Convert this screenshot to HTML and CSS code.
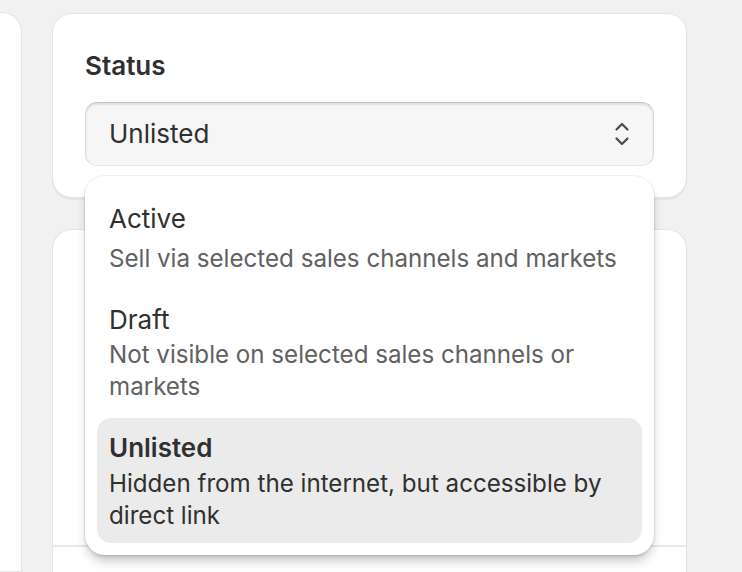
FILE: index.html
```html
<!DOCTYPE html>
<html lang="en">
<head>
<meta charset="utf-8">
<title>Status</title>
<link rel="stylesheet" href="styles.css">
</head>
<body>
<div class="page">
  <div class="side-card"></div>
  <div class="main">
    <section class="card status-card">
      <h2 class="card-title">Status</h2>
      <div class="select-wrap">
        <div class="select">
          <span class="select-value">Unlisted</span>
          <svg class="select-icon" width="16" height="26" viewBox="0 0 16 26" aria-hidden="true">
            <path d="M2.5 8.5 L8 3 L13.5 8.5" fill="none" stroke="#4a4a4a" stroke-width="2.2" stroke-linecap="round" stroke-linejoin="round"/>
            <path d="M2.5 17.5 L8 23 L13.5 17.5" fill="none" stroke="#4a4a4a" stroke-width="2.2" stroke-linecap="round" stroke-linejoin="round"/>
          </svg>
        </div>
        <div class="popover">
          <div class="option option-first">
            <div class="option-title">Active</div>
            <div class="option-desc">Sell via selected sales channels and markets</div>
          </div>
          <div class="option">
            <div class="option-title">Draft</div>
            <div class="option-desc">Not visible on selected sales channels or markets</div>
          </div>
          <div class="option option-selected">
            <div class="option-title">Unlisted</div>
            <div class="option-desc">Hidden from the internet, but accessible by direct link</div>
          </div>
        </div>
      </div>
    </section>
    <section class="card second-card">
      <div class="second-top"></div>
      <div class="divider"></div>
      <div class="second-bottom"></div>
    </section>
  </div>
</div>
</body>
</html>
```

FILE: styles.css
```css
* {
  box-sizing: border-box;
}

html, body {
  margin: 0;
  padding: 0;
  height: 100%;
}

body {
  background: #f1f1f1;
  font-family: Inter, "Noto Sans", "Liberation Sans", sans-serif;
  color: #303030;
  overflow: hidden;
}

.page {
  display: flex;
  gap: 30px;
  padding-top: 13px;
  height: 572px;
  overflow: hidden;
}

.side-card {
  width: 22px;
  flex: none;
  margin-top: -1px;
  background: #fff;
  border: 1px solid #e4e4e4;
  border-left: none;
  border-radius: 0 20px 0 0;
  box-shadow: 0 1px 0 rgba(26, 26, 26, 0.06);
}

.main {
  width: 635px;
  flex: none;
  display: flex;
  flex-direction: column;
  gap: 31px;
}

.card {
  background: #fff;
  border: 1px solid #e4e4e4;
  border-radius: 20px;
  box-shadow: 0 2px 0 rgba(26, 26, 26, 0.05);
}

.status-card {
  padding: 36px 32px 31px;
  position: relative;
  z-index: 2;
}

.card-title {
  margin: 0 0 20px;
  font-size: 26px;
  line-height: 32px;
  font-weight: 600;
  color: #303030;
}

.select-wrap {
  position: relative;
}

.select {
  height: 64px;
  display: flex;
  align-items: center;
  justify-content: space-between;
  padding: 0 23px 0 23px;
  background: #f6f6f6;
  border: 1px solid #dadada;
  border-top-color: #c4c4c4;
  border-bottom-color: #e8e8e8;
  border-radius: 12px;
  box-shadow: inset 0 2px 2px rgba(26, 26, 26, 0.1);
}

.select-value {
  font-size: 26px;
  line-height: 32px;
  color: #303030;
}

.select-icon {
  display: block;
  flex: none;
}

.popover {
  position: absolute;
  top: calc(100% + 10px);
  left: 0;
  right: 0;
  background: #fff;
  border-radius: 20px;
  padding: 13px 12px 12px;
  display: flex;
  flex-direction: column;
  gap: 4px;
  box-shadow:
    0 0 0 1px rgba(26, 26, 26, 0.06),
    0 2px 3px rgba(26, 26, 26, 0.08),
    0 8px 12px -3px rgba(26, 26, 26, 0.28);
}

.option {
  padding: 14px 12px 11px;
  border-radius: 14px;
  display: flex;
  flex-direction: column;
  gap: 3px;
}

.option-first {
  gap: 8px;
}

.option-title {
  font-size: 26px;
  line-height: 32px;
  color: #303030;
}

.option-desc {
  font-size: 24.15px;
  line-height: 32px;
  color: #616161;
}

.option-selected {
  background: #ebebeb;
  gap: 4px;
}

.option-selected .option-title {
  font-weight: 600;
}

.option-selected .option-desc {
  color: #303030;
}

.second-card {
  flex: 1;
  border-bottom: none;
  border-radius: 20px 20px 0 0;
  display: flex;
  flex-direction: column;
}

.second-top {
  height: 315px;
}

.divider {
  height: 2px;
  background: #e8e8e8;
}

.second-bottom {
  flex: 1;
}
```
